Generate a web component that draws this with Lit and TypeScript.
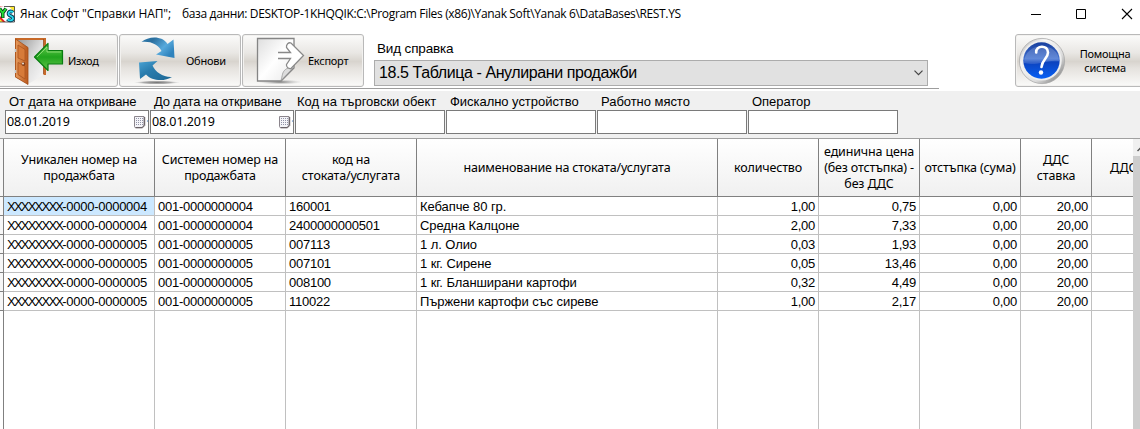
import { LitElement, html, css, svg } from "lit";
import { customElement } from "lit/decorators.js";
import { classMap } from "lit/directives/class-map.js";

interface Column { lines: string[]; cls: string; numeric?: boolean; }

const COLUMNS: Column[] = [
  { lines: ["Уникален номер на", "продажбата"], cls: "h1" },
  { lines: ["Системен номер на", "продажбата"], cls: "h2" },
  { lines: ["код на", "стоката/услугата"], cls: "h3" },
  { lines: ["наименование на стоката/услугата"], cls: "h4" },
  { lines: ["количество"], cls: "h5", numeric: true },
  { lines: ["единична цена", "(без отстъпка) -", "без ДДС"], cls: "h6", numeric: true },
  { lines: ["отстъпка (сума)"], cls: "h7", numeric: true },
  { lines: ["ДДС", "ставка"], cls: "h8", numeric: true },
  { lines: ["ДДС"], cls: "h9" },
];

const ROWS: string[][] = [
  ["XXXXXXXX|-0000-0000004", "001-0000000004", "160001", "Кебапче 80 гр.", "1,00", "0,75", "0,00", "20,00", ""],
  ["XXXXXXXX|-0000-0000004", "001-0000000004", "2400000000501", "Средна Калцоне", "2,00", "7,33", "0,00", "20,00", ""],
  ["XXXXXXXX|-0000-0000005", "001-0000000005", "007113", "1 л. Олио", "0,03", "1,93", "0,00", "20,00", ""],
  ["XXXXXXXX|-0000-0000005", "001-0000000005", "007101", "1 кг. Сирене", "0,05", "13,46", "0,00", "20,00", ""],
  ["XXXXXXXX|-0000-0000005", "001-0000000005", "008100", "1 кг. Бланширани картофи", "0,32", "4,49", "0,00", "20,00", ""],
  ["XXXXXXXX|-0000-0000005", "001-0000000005", "110022", "Пържени картофи със сиреве", "1,00", "2,17", "0,00", "20,00", ""],
];

const FILTERS = [
  { label: "От дата на откриване", value: "08.01.2019", date: true },
  { label: "До дата на откриване", value: "08.01.2019", date: true },
  { label: "Код на търговски обект", value: "", date: false, tight: true },
  { label: "Фискално устройство", value: "", date: false },
  { label: "Работно място", value: "", date: false },
  { label: "Оператор", value: "", date: false },
];

const appIcon = html`<svg class="appicon" width="15" height="17" viewBox="0 0 15 17">
  <path d="M0 .5H14.500V16H0Z" fill="#fff"/>
  <path d="M9 .5H14.500V6Z" fill="#ffe930"/><path d="M0 1L4 .5H0Z" fill="#e82020"/>
  <path d="M0 10L5.500 16H0Z" fill="#e82020"/><path d="M0 13L3 16H0Z" fill="#ffe930"/>
  <path d="M4 .5H14.500V16H0" fill="none" stroke="#333" stroke-width=".8"/>
  <path d="M-.5 2.500L2.700 7L6 2.500M2.700 7V12" fill="none" stroke="#05401a" stroke-width="3.600"/>
  <path d="M-.5 2.500L2.700 7L6 2.500M2.700 7V11.500" fill="none" stroke="#25e035" stroke-width="1.800"/>
  <path d="M13 6.500C11 4.500 8.500 5.500 8.500 7.700C8.500 10.500 13 9.500 13 12.200C13 14.800 9 15 7.500 13.200" fill="none" stroke="#063c58" stroke-width="3.600"/>
  <path d="M13 6.500C11 4.500 8.500 5.500 8.500 7.700C8.500 10.500 13 9.500 13 12.200C13 14.800 9 15 7.500 13.200" fill="none" stroke="#28dcee" stroke-width="1.800"/>
</svg>`;

const exitIcon = html`<svg width="52" height="50" viewBox="13 35 52 50">
  <defs>
    <linearGradient id="wood"><stop offset="0" stop-color="#e69a5c"/><stop offset="1" stop-color="#b9581c"/></linearGradient>
    <linearGradient id="inside" x2="1" y2="1"><stop offset="0" stop-color="#999"/><stop offset=".5" stop-color="#ddd"/><stop offset="1" stop-color="#fafafa"/></linearGradient>
    <linearGradient id="green" x2="0" y2="1"><stop offset="0" stop-color="#6ccc52"/><stop offset=".5" stop-color="#20a41d"/><stop offset="1" stop-color="#65c44b"/></linearGradient>
  </defs>
  <path d="M15 37H46V74H28V83L15 76Z" fill="#c76928"/>
  <path d="M18 39H43.500V74L28 83Z" fill="url(#inside)"/>
  <path d="M15.500 38L28 46.500V83.500L15.500 76Z" fill="url(#wood)" stroke="#a44e18" stroke-width=".8"/>
  <path d="M18 44L25 48.500V60L18 57ZM18 61.500L25 65V78L18 73.500Z" fill="#d77b39" stroke="#a9541f" stroke-width=".8"/>
  <path d="M43.500 38V73" stroke="#8e4418" stroke-width=".7"/>
  <circle cx="23.500" cy="63" r="1.900" fill="#874018"/><circle cx="23" cy="62.500" r="1" fill="#e7dfd4"/>
  <path d="M15.500 48V51M15.500 69V72" stroke="#c3c8cb" stroke-width="1.600"/>
  <path d="M34.500 56L48 42.500V49.500H62.500V63H48V69.500Z" fill="url(#green)" stroke="#087c10" stroke-width="1.200" stroke-linejoin="round"/>
  <path d="M37 56L47 46V51H61" fill="none" stroke="#9be383" stroke-width=".8"/>
</svg>`;

const refreshIcon = html`<svg width="48" height="50" viewBox="133 35 48 50">
  <defs>
    <linearGradient id="b1" x2="1" y2=".6"><stop offset="0" stop-color="#2d7cb0"/><stop offset=".3" stop-color="#2b6f9e"/><stop offset=".7" stop-color="#57a9dc"/><stop offset="1" stop-color="#2f83bd"/></linearGradient>
    <linearGradient id="b2" x2="1" y2="1"><stop offset="0" stop-color="#4aa3d4"/><stop offset=".4" stop-color="#2a7dae"/><stop offset="1" stop-color="#1d6794"/></linearGradient>
    <radialGradient id="shade"><stop offset="0" stop-color="#777"/><stop offset=".6" stop-color="#999" stop-opacity=".8"/><stop offset="1" stop-color="#ccc" stop-opacity="0"/></radialGradient>
  </defs>
  <ellipse cx="157" cy="81.500" rx="23" ry="1.900" fill="url(#shade)"/>
  <path d="M141.500 41C149 34.500 163 35 167.500 43L173.500 38.500L174.500 57L156 53.500L161.500 50C158 43.500 151 40 141.500 41Z" fill="url(#b1)"/>
  <path d="M139 61.500L157.500 60L152.500 64.500C155.500 71 163 76.500 172 76C165 80.500 152 80.500 146 73.500L140 78Z" fill="url(#b2)"/>
</svg>`;

const exportIcon = html`<svg width="50" height="50" viewBox="255 35 50 50">
  <defs>
    <linearGradient id="page" x2="1" y2="1"><stop offset="0" stop-color="#dedede"/><stop offset=".5" stop-color="#fff"/><stop offset="1" stop-color="#e8e8e8"/></linearGradient>
    <radialGradient id="shade2"><stop offset="0" stop-color="#777"/><stop offset="1" stop-color="#bbb" stop-opacity="0"/></radialGradient>
  </defs>
  <ellipse cx="280" cy="81" rx="22" ry="2.500" fill="url(#shade2)"/>
  <path d="M257.500 37.500H294V67L281 80H257.500Z" fill="url(#page)" stroke="#858585" stroke-width="1.300"/>
  <path d="M281 79.500C282.500 75 282 71 285.500 68.500C288 66 291 69 293 67Z" fill="#ddd" stroke="#999" stroke-width=".8"/>
  <path d="M278 51.500H290L286.500 46C286 43.500 288.500 41 291 42L303.500 54.500L291 67.500C288.500 68 286 66 286.500 63.500L290.500 57.500H278Z" fill="#fff"/>
  <path d="M278 51.500H290.500L286.500 46.500C286 43.500 288.500 41 291 42L303.500 54.500L291 67.500C288.500 68 286 66 286.500 63.500L290.500 57.500H278" fill="none" stroke="#898989" stroke-width="1.300"/>
</svg>`;

const helpIcon = html`<svg width="48" height="48" viewBox="0 0 48 48">
  <defs>
    <linearGradient id="ring" x2="1" y2="1"><stop offset="0" stop-color="#aaa"/><stop offset=".3" stop-color="#f9f9f9"/><stop offset=".65" stop-color="#ddd"/><stop offset="1" stop-color="#666"/></linearGradient>
    <linearGradient id="ball" x2="0" y2="1"><stop offset="0" stop-color="#173f9e"/><stop offset=".45" stop-color="#3f6fd0"/><stop offset=".55" stop-color="#0c43bf"/><stop offset="1" stop-color="#0860f4"/></linearGradient>
  </defs>
  <circle cx="24" cy="24" r="22.600" fill="url(#ring)" stroke="#aaa" stroke-width=".8"/>
  <circle cx="23.700" cy="23.500" r="20" fill="#eee"/>
  <circle cx="23.500" cy="23.500" r="18.200" fill="url(#ball)"/>
  <path d="M6 26C6 4 41 4 41 24C30 22 20 29 6 26Z" fill="#fff" opacity=".18"/>
  <path d="M18.200 15.500C17.500 8 30 7.500 30 15.500C30 21.500 24 22.500 23.500 30" fill="none" stroke="#fff" stroke-width="2.600" stroke-linecap="round"/>
  <circle cx="23" cy="35.500" r="2.200" fill="#fff"/>
</svg>`;

const calendarIcon = html`<svg class="cal" width="14" height="13" viewBox="0 0 14 13">
  <path d="M.5 .5H10V9L8 11.500H1.500Q.5 11.500 .5 10.500Z" fill="#f4f4f8" stroke="#8b858c"/>
  <path d="M10.700 1V9.500L8.500 11.800H1.500" fill="none" stroke="#5c5358"/>
  ${[3, 5, 7, 9].map((y) => svg`<path d=${`M2 ${y - 0.500}H9`} stroke="#9294a8" stroke-dasharray="1 1"/>`)}
  <circle cx="13.500" cy="5" r=".6" fill="#3670b8"/>
</svg>`;

@customElement("app-root")
export class AppRoot extends LitElement {
  static styles = css`
    :host { display: flex; flex-direction: column; width: 1140px; height: 429px; overflow: hidden; background: #fff; color: #000; font: 13px/16px "Noto Sans", sans-serif; }
    * { box-sizing: border-box; }
    svg { display: block; flex: none; }
    .titlebar { display: flex; height: 34px; flex: none; align-items: flex-start; }
    .appicon { margin-top: 6px; }
    .title { margin: 6px 0 0 5px; flex: 1; display: flex; gap: 11px; font: 12px/16px "Open Sans", sans-serif; white-space: pre; }
    .t1 { letter-spacing: -0.13px; }
    .t2 { letter-spacing: -0.34px; }
    .winbtns { margin: 8px 7px 0 0; }
    .toolbar { display: flex; height: 57px; flex: none; position: relative; }
    .rule { position: absolute; left: 0; bottom: 2px; width: 939px; height: 1px; background: #9d9d9d; }
    .btn { display: flex; height: 53px; width: 122px; margin-right: 1px; flex: none; border: 1px solid #b9b9b9; border-radius: 3px; background: linear-gradient(#fbfbfa 0%, #e9e7e4 35%, #d8d4ce 52%, #e5e2de 65%, #fafaf9 100%); box-shadow: inset 0 0 0 1px #f2f1ef; font: 11px/14px "Noto Sans", sans-serif; letter-spacing: -0.25px; align-items: center; }
    .exit { width: 123px; margin-left: -5px; padding-left: 17px; }
    .exit span { margin-left: 3px; }
    .refresh { padding-left: 13px; }
    .refresh span { margin-left: 5px; }
    .export { padding-left: 12px; }
    .export span { margin-left: 3px; }
    .report { margin-left: 9px; width: 554px; flex: none; padding-top: 7px; }
    .report label { display: block; height: 19px; padding-left: 3px; font: 13.5px/16px "Liberation Sans", sans-serif; letter-spacing: -0.15px; }
    .select { display: flex; align-items: center; justify-content: space-between; height: 26px; border: 1px solid #acacac; background: #e1e1e1; padding: 0 4px; font: 16px/24px "Liberation Sans", sans-serif; letter-spacing: -0.41px; }
    .help { width: 130px; margin: 0 0 0 87px; padding-left: 2px; }
    .help span { width: 80px; text-align: center; }
    .filters { display: flex; gap: 1px; height: 47px; flex: none; padding: 3px 0 0 5px; background: #f0f0f0; }
    .filter { width: 150px; flex: none; }
    .filter.date { width: 144px; }
    .filter label { display: block; height: 16px; padding-left: 4px; font: 13px/16px "Liberation Sans", sans-serif; letter-spacing: -0.04px; white-space: nowrap; }
    .filter.date label { letter-spacing: -0.15px; }
    .filter.tight label { padding-left: 2px; }
    .box { display: flex; align-items: center; justify-content: space-between; height: 24px; border: 1px solid #7a7a7a; background: #fff; padding-left: 1px; font: 12.5px/22px "Noto Sans", sans-serif; letter-spacing: -0.1px; }
    .table { flex: 1; min-height: 0; display: flex; border-top: 1px solid #a0a0a0; }
    .grid { width: 1133px; flex: none; display: grid; grid-template-columns: 4px 151px 131px 131px 301px 101px 101px 101px 71px 41px; grid-template-rows: 58px repeat(6, 19px) 1fr; overflow: hidden; }
    .th { display: flex; flex-direction: column; align-items: center; justify-content: center; border-right: 1px solid #808080; border-bottom: 1px solid #808080; background: linear-gradient(#fff, #f0f0f0); font: 12.5px/16px "Noto Sans", sans-serif; letter-spacing: -0.16px; white-space: nowrap; }
    .h9 { align-items: flex-start; padding-left: 18px; overflow: hidden; border-right: 0; }
    .td { border-right: 1px solid #c0c0c0; border-bottom: 1px solid #c0c0c0; padding: 1px 3px 0 3px; font: 13px/17px "Liberation Sans", sans-serif; letter-spacing: -0.26px; white-space: nowrap; overflow: hidden; }
    .c3 { letter-spacing: -0.08px; }
    .num { text-align: right; }
    .sel { background: #cce8ff; }
    .x { letter-spacing: -1.77px; }
    .mark { border-right: 1px solid #808080; border-bottom: 1px solid #808080; background: #f7f7f7; }
    .rest { border-right: 1px solid #c0c0c0; }
    .rest.first { border-color: #808080; }
    .last { border-right: 0; }
    .scroll { flex: 1; background: #cdcdcd; }
    .up { height: 17px; background: #f0f0f0; overflow: hidden; padding: 7px 0 0 4px; }
  `;

  private cell(text: string, c: number, r: number) {
    const cls = { td: true, num: !!COLUMNS[c].numeric, sel: r === 0 && c === 0, last: c === 8, ["c" + c]: true };
    const parts = text.split("|");
    return html`<div class=${classMap(cls)}>${parts.length > 1 ? html`<span class="x">${parts[0]}</span>${parts[1]}` : text}</div>`;
  }

  render() {
    return html`
      <div class="titlebar">${appIcon}
        <div class="title"><span class="t1">Янак Софт "Справки НАП";</span><span class="t2">база данни: DESKTOP-1KHQQIK:C:\\Program Files (x86)\\Yanak Soft\\Yanak 6\\DataBases\\REST.YS</span></div>
        <svg class="winbtns" width="102" height="12" viewBox="1031 8 102 12" fill="none" stroke="#000">
          <path d="M1031 14.500H1041"/><path d="M1076.500 9.500H1085.500V18.500H1076.500Z"/><path d="M1122 9L1132 19M1132 9L1122 19" stroke-width="1.100"/>
        </svg>
      </div>
      <div class="toolbar">
        <div class="rule"></div>
        <div class="btn exit">${exitIcon}<span>Изход</span></div>
        <div class="btn refresh">${refreshIcon}<span>Обнови</span></div>
        <div class="btn export">${exportIcon}<span>Експорт</span></div>
        <div class="report"><label>Вид справка</label>
          <div class="select"><span>18.5 Таблица - Анулирани продажби</span>
            <svg width="9" height="6" viewBox="0 0 9 6"><path d="M.5 .7L4.500 4.700L8.500 .7" fill="none" stroke="#444" stroke-width="1.200"/></svg>
          </div>
        </div>
        <div class="btn help">${helpIcon}<span>Помощна<br>система</span></div>
      </div>
      <div class="filters">${FILTERS.map((f) => html`
        <div class=${classMap({ filter: true, date: f.date, tight: !!f.tight })}><label>${f.label}</label><div class="box"><span>${f.value}</span>${f.date ? calendarIcon : ""}</div></div>`)}
      </div>
      <div class="table">
        <div class="grid">
          <div class="mark"></div>
          ${COLUMNS.map((c) => html`<div class="th ${c.cls}">${c.lines.map((l) => html`<span>${l}</span>`)}</div>`)}
          ${ROWS.map((row, r) => html`<div class="mark"></div>${row.map((t, c) => this.cell(t, c, r))}`)}
          <div class="rest first"></div>
          ${COLUMNS.map((_, c) => html`<div class=${classMap({ rest: true, last: c === 8 })}></div>`)}
        </div>
        <div class="scroll"><div class="up"><svg width="9" height="6" viewBox="0 0 9 6"><path d="M.5 5L4.500 1L8.500 5" fill="none" stroke="#555" stroke-width="1.500"/></svg></div></div>
      </div>`;
  }
}
